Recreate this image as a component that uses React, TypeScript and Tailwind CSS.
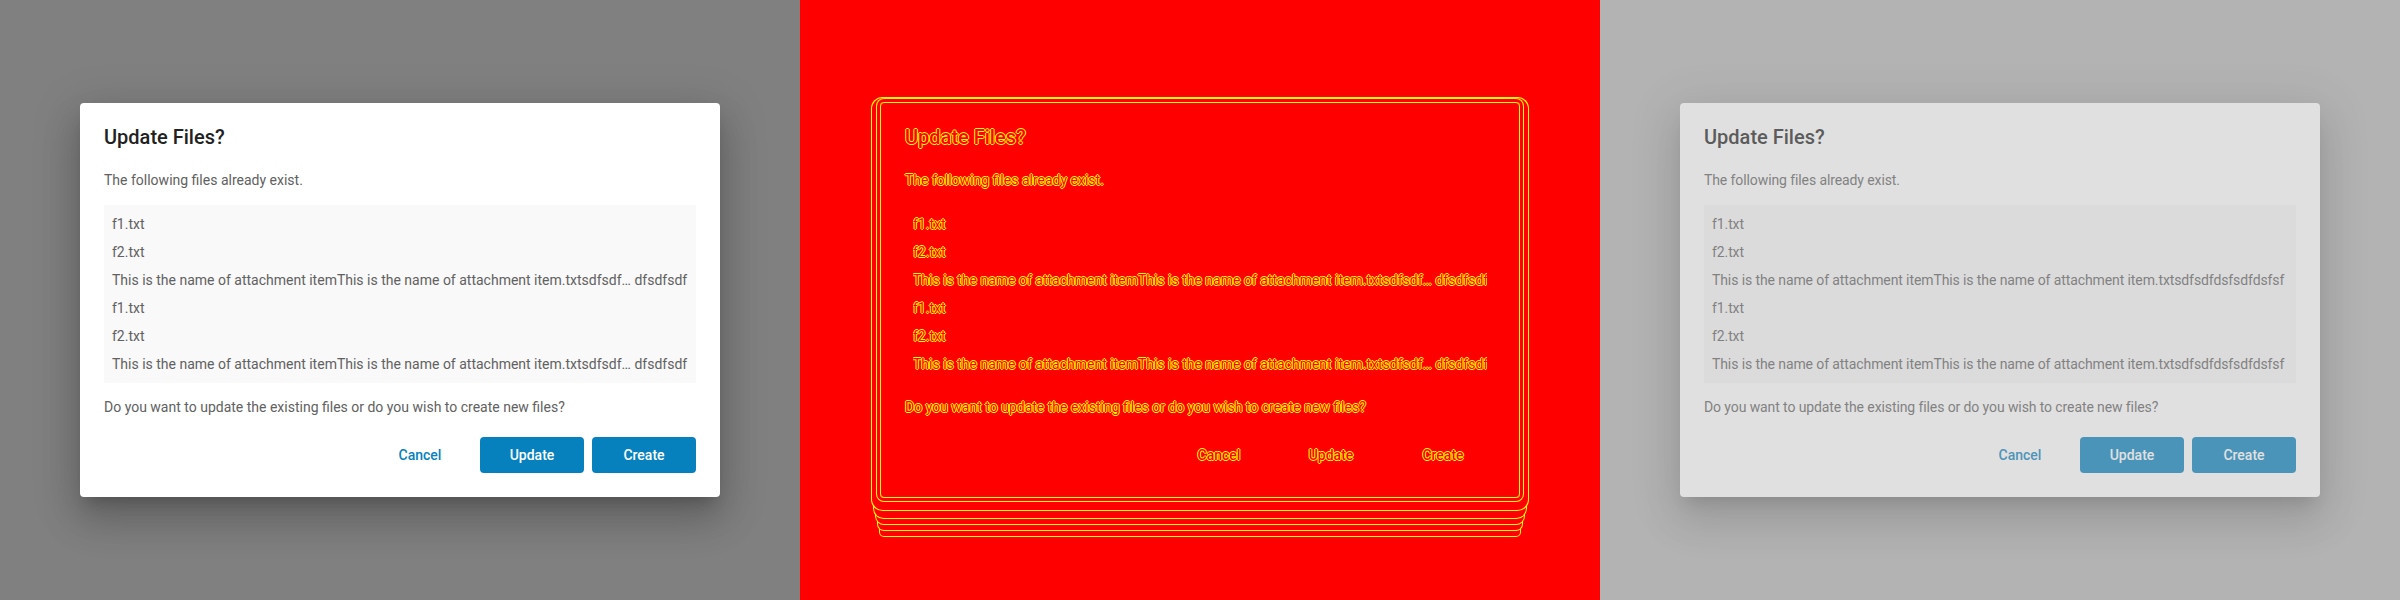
import React from "react";

type V = "normal" | "diff" | "faded";

const ELLIPSIZED =
  "This is the name of attachment itemThis is the name of attachment item.txtsdfsdf\u2026 dfsdfsdf";
const FULL =
  "This is the name of attachment itemThis is the name of attachment item.txtsdfsdfdsfsdfdsfsf";

function Dialog({ v }: { v: V }) {
  const diff = v === "diff";
  const stroke =
    "text-[#ff0000] [text-shadow:1px_0_0_#ffff00,-1px_0_0_#ffff00,0_1px_0_#ffff00,0_-1px_0_#ffff00]";
  const title = diff ? stroke : "text-[#212121]";
  const body = diff ? stroke : "text-[#616161]";
  const primary = diff ? stroke : "text-[#0681be]";
  const tight = v === "faded" ? "tracking-[-0.1px]" : "";
  const long = v === "faded" ? FULL : ELLIPSIZED;
  const files = ["f1.txt", "f2.txt", long, "f1.txt", "f2.txt", long];

  const shell = diff
    ? "border border-[#ffff00] shadow-[0_0_0_3px_#ff0000,0_0_0_4px_#ffff00,0_4px_0_8px_#ff0000,0_4px_0_9px_#ffff00,0_14px_0_6px_#ff0000,0_14px_0_7px_#ffff00,0_22px_0_4px_#ff0000,0_22px_0_5px_#ffff00,0_30px_0_2px_#ff0000,0_30px_0_3px_#ffff00,0_38px_0_0px_#ff0000,0_38px_0_1px_#ffff00]"
    : "bg-white shadow-[0_11px_15px_-7px_rgba(0,0,0,0.2),0_24px_38px_3px_rgba(0,0,0,0.14),0_9px_46px_8px_rgba(0,0,0,0.12)]";

  return (
    <div
      className={`w-[640px] rounded px-6 pt-[22px] pb-6 font-['Roboto','Liberation_Sans',sans-serif] ${shell} ${
        v === "faded" ? "opacity-60" : ""
      }`}
    >
      <h2 className={`text-[20px] leading-6 font-medium ${title}`}>Update Files?</h2>
      <p className={`mt-[21px] text-[14px] leading-5 ${body} ${tight}`}>
        The following files already exist.
      </p>
      <div
        className={`mt-[15px] py-[5px] ${diff ? "" : v === "faded" ? "bg-[#f7f7f7]" : "bg-[#f9f9f9]"}`}
      >
        {files.map((f, i) => (
          <div key={i} className="h-7 px-2">
            <div
              className={`h-7 leading-7 text-[14px] whitespace-nowrap overflow-hidden ${body} ${tight}`}
            >
              {f}
            </div>
          </div>
        ))}
      </div>
      <p className={`mt-[14px] text-[14px] leading-5 ${body} ${tight}`}>
        Do you want to update the existing files or do you wish to create new files?
      </p>
      <div className="mt-5 flex justify-end gap-2">
        <button className={`w-[104px] h-9 rounded text-[14px] font-medium ${primary}`}>
          Cancel
        </button>
        <button
          className={`w-[104px] h-9 rounded text-[14px] font-medium ${
            diff ? stroke : "bg-[#0681be] text-white"
          }`}
        >
          Update
        </button>
        <button
          className={`w-[104px] h-9 rounded text-[14px] font-medium ${
            diff ? stroke : "bg-[#0681be] text-white"
          }`}
        >
          Create
        </button>
      </div>
    </div>
  );
}

export default function App() {
  return (
    <div className="grid grid-cols-3 w-[2400px] h-[600px] overflow-hidden">
      <div className="bg-[#808080] flex items-center justify-center">
        <Dialog v="normal" />
      </div>
      <div className="bg-[#ff0000] flex items-center justify-center">
        <Dialog v="diff" />
      </div>
      <div className="bg-[#b3b3b3] flex items-center justify-center">
        <Dialog v="faded" />
      </div>
    </div>
  );
}
